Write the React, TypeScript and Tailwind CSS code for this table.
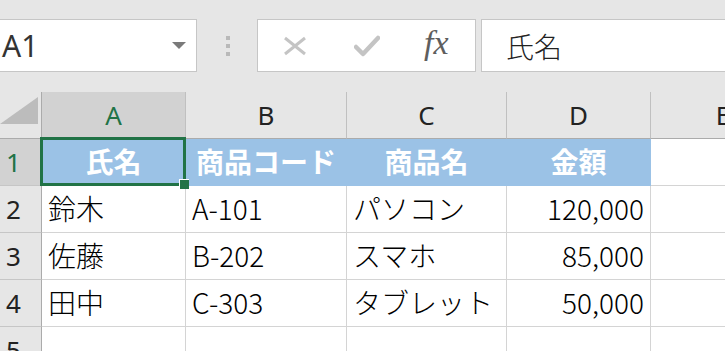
import React from 'react';

const cols = [
  { id: 'A', w: 'w-[144px]' },
  { id: 'B', w: 'w-[161px]' },
  { id: 'C', w: 'w-[160px]' },
  { id: 'D', w: 'w-[144px]' },
  { id: 'E', w: 'w-[145px]' },
];

const rows = [
  ['鈴木', 'A-101', 'パソコン', '120,000'],
  ['佐藤', 'B-202', 'スマホ', '85,000'],
  ['田中', 'C-303', 'タブレット', '50,000'],
  ['', '', '', ''],
];

const headers = ['氏名', '商品コード', '商品名', '金額'];

const FormulaBar: React.FC = () => (
  <div className="h-[92px] bg-[#e6e6e6] pt-[19px] flex items-start">
    {/* name box */}
    <div className="w-[197px] h-[53px] bg-white border-y border-r border-[#c6c6c6] flex items-center justify-between pl-[2px] pr-[10px]">
      <span className="text-[30px] leading-none text-[#333] font-['Noto_Sans',sans-serif]">A1</span>
      <svg width="14" height="7" viewBox="0 0 14 7">
        <polygon points="0,0 14,0 7,7" fill="#7a7a7a" />
      </svg>
    </div>

    <div className="w-[60px] h-[53px] flex flex-col items-center justify-center gap-[4px] pl-[2px]">
      <div className="w-[4px] h-[4px] bg-[#b9b9b9]" />
      <div className="w-[4px] h-[4px] bg-[#b9b9b9]" />
      <div className="w-[4px] h-[4px] bg-[#b9b9b9]" />
    </div>

    {/* cancel / enter / fx */}
    <div className="w-[219px] h-[53px] bg-white border border-[#c6c6c6] flex items-center pl-[25px]">
      <svg width="24" height="20" viewBox="0 0 24 20">
        <path d="M2 2 L22 18 M22 2 L2 18" stroke="#c4c4c4" strokeWidth="3" fill="none" />
      </svg>
      <svg className="ml-[47px]" width="26" height="22" viewBox="0 0 26 22">
        <path d="M2 12 L9 19 L24 3" stroke="#c4c4c4" strokeWidth="4.5" fill="none" strokeLinejoin="round" strokeLinecap="round" />
      </svg>
      <span className="ml-[44px] text-[34px] leading-none italic text-[#5e5e5e] font-['Liberation_Serif',serif] -mt-[6px]">fx</span>
    </div>

    <div className="ml-[5px] flex-1 h-[53px] bg-white border-y border-l border-[#c6c6c6] flex items-center pl-[24px]">
      <span className="text-[28px] leading-none text-[#222] font-light font-['Noto_Sans_CJK_JP',sans-serif]">氏名</span>
    </div>
  </div>
);

const App: React.FC = () => {
  return (
    <div className="w-[725px] h-[351px] overflow-hidden bg-white">
      <FormulaBar />

      {/* column headers */}
      <div className="flex h-[47px] bg-[#e6e6e6]">
        <div className="w-[42px] shrink-0 border-r border-b border-[#ababab] pt-[5px]">
          <svg width="38" height="27" viewBox="0 0 38 27">
            <polygon points="0,27 38,0 38,27" fill="#bcbcbc" />
          </svg>
        </div>
        {cols.map((c) => (
          <div
            key={c.id}
            className={`${c.w} shrink-0 border-r border-b border-r-[#c0c0c0] border-b-[#ababab] flex items-center justify-center text-[26px] font-['Noto_Sans',sans-serif] ${
              c.id === 'A' ? 'bg-[#d2d2d2] text-[#217346]' : 'text-[#222]'
            }`}
          >
            {c.id}
          </div>
        ))}
      </div>

      {/* row 1: header values */}
      <div className="flex h-[47px] font-['Noto_Sans_CJK_JP',sans-serif]">
        <div className="w-[42px] shrink-0 bg-[#d2d2d2] border-r border-b border-r-[#ababab] border-b-[#c6c6c6] pl-[6px] flex items-center text-[26px] text-[#217346] font-['Noto_Sans',sans-serif]">
          1
        </div>
        {headers.map((h, i) => (
          <div
            key={h}
            className={`${cols[i].w} shrink-0 relative bg-[#9bc2e6] border-r border-b border-[#9bc2e6] flex items-center justify-center pb-[2px] text-[28px] font-bold text-white ${
              i === 0 ? 'z-10' : ''
            }`}
          >
            {h}
            {i === 0 && (
              <>
                <div className="absolute -left-[2px] -top-[2px] -right-[1px] -bottom-[1px] border-[3px] border-[#217346]" />
                <div className="absolute -right-[4px] -bottom-[4px] w-[10px] h-[10px] bg-[#217346] border-l border-t border-white" />
              </>
            )}
          </div>
        ))}
        <div className={`${cols[4].w} shrink-0 border-r border-b border-[#d4d4d4]`} />
      </div>

      {/* data rows */}
      {rows.map((r, ri) => (
        <div key={ri} className="flex h-[47px] font-['Noto_Sans_CJK_JP',sans-serif] font-light text-[28px] text-black">
          <div className="w-[42px] shrink-0 bg-[#e6e6e6] border-r border-b border-r-[#ababab] border-b-[#c6c6c6] pl-[6px] flex items-center text-[26px] font-normal text-[#222] font-['Noto_Sans',sans-serif]">
            {ri + 2}
          </div>
          {r.map((v, ci) => (
            <div
              key={ci}
              className={`${cols[ci].w} shrink-0 border-r border-b border-[#d4d4d4] flex items-center pb-[3px] whitespace-nowrap ${
                ci === 3 ? 'justify-end pr-[6px]' : 'pl-[6px]'
              }`}
            >
              {v}
            </div>
          ))}
          <div className={`${cols[4].w} shrink-0 border-r border-b border-[#d4d4d4]`} />
        </div>
      ))}
    </div>
  );
};

export default App;
